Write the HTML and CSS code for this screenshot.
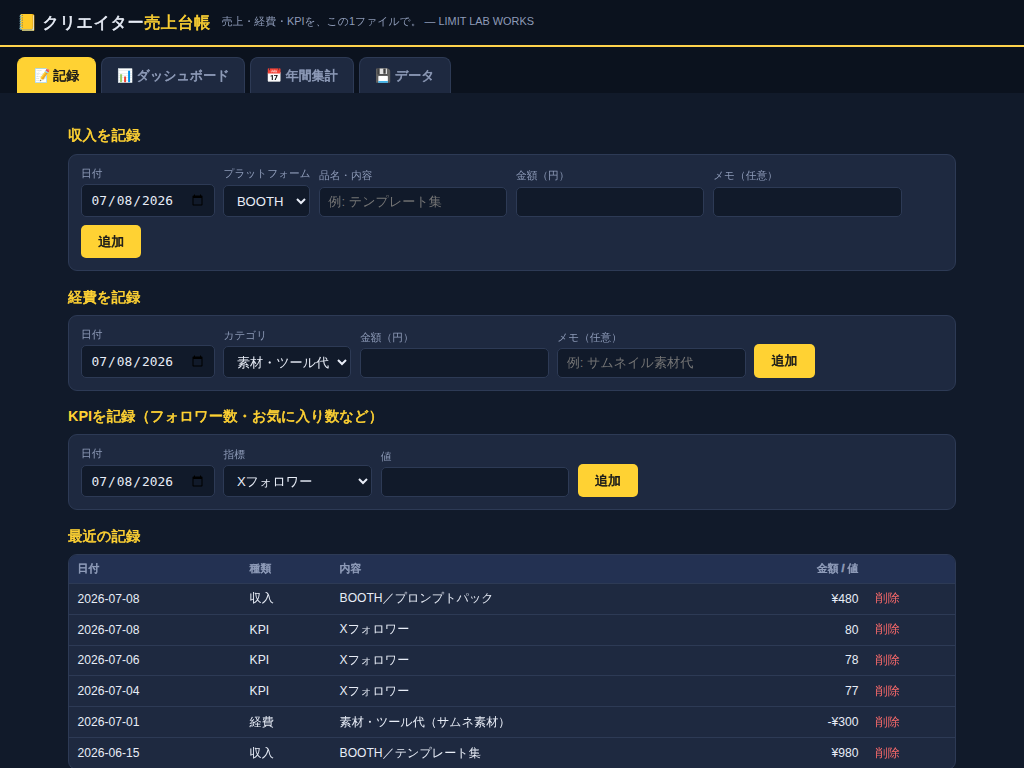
FILE: index.html
```html
<!DOCTYPE html>
<html lang="ja">
<head>
<meta charset="utf-8">
<title>クリエイター売上台帳</title>
<link rel="stylesheet" href="styles.css">
</head>
<body>
<header class="top">
  <h1>📒 クリエイター<span class="accent">売上台帳</span></h1>
  <span class="tagline">売上・経費・KPIを、この1ファイルで。 — LIMIT LAB WORKS</span>
</header>
<nav class="tabs">
  <button class="tab active">📝 記録</button>
  <button class="tab tab-dash">📊 ダッシュボード</button>
  <button class="tab tab-year">📅 年間集計</button>
  <button class="tab tab-data">💾 データ</button>
</nav>
<main>
  <h2>収入を記録</h2>
  <form class="card">
    <label>日付<input type="date" value="2026-07-08"></label>
    <label class="w-platform">プラットフォーム<select class="w-platform"><option>BOOTH</option></select></label>
    <label>品名・内容<input type="text" placeholder="例: テンプレート集"></label>
    <label>金額（円）<input type="text"></label>
    <label>メモ（任意）<input type="text"></label>
    <button type="button" class="add">追加</button>
  </form>
  <h2>経費を記録</h2>
  <form class="card">
    <label>日付<input type="date" value="2026-07-08"></label>
    <label>カテゴリ<select class="w-category"><option>素材・ツール代</option></select></label>
    <label>金額（円）<input type="text"></label>
    <label>メモ（任意）<input type="text" placeholder="例: サムネイル素材代"></label>
    <button type="button" class="add">追加</button>
  </form>
  <h2><span class="latin">KPI</span>を記録（フォロワー数・お気に入り数など）</h2>
  <form class="card">
    <label>日付<input type="date" value="2026-07-08"></label>
    <label>指標<select class="w-metric"><option>Xフォロワー</option></select></label>
    <label>値<input type="text"></label>
    <button type="button" class="add">追加</button>
  </form>
  <h2>最近の記録</h2>
  <div class="table-wrap">
    <table>
      <colgroup><col class="c-date"><col class="c-kind"><col><col class="c-amount"><col class="c-action"></colgroup>
      <thead><tr><th>日付</th><th>種類</th><th>内容</th><th class="num">金額 / 値</th><th></th></tr></thead>
      <tbody>
        <tr><td>2026-07-08</td><td>収入</td><td>BOOTH／プロンプトパック</td><td class="num">¥480</td><td class="del">削除</td></tr>
        <tr><td>2026-07-08</td><td>KPI</td><td>Xフォロワー</td><td class="num">80</td><td class="del">削除</td></tr>
        <tr><td>2026-07-06</td><td>KPI</td><td>Xフォロワー</td><td class="num">78</td><td class="del">削除</td></tr>
        <tr><td>2026-07-04</td><td>KPI</td><td>Xフォロワー</td><td class="num">77</td><td class="del">削除</td></tr>
        <tr><td>2026-07-01</td><td>経費</td><td>素材・ツール代（サムネ素材）</td><td class="num">-¥300</td><td class="del">削除</td></tr>
        <tr><td>2026-06-15</td><td>収入</td><td>BOOTH／テンプレート集</td><td class="num">¥980</td><td class="del">削除</td></tr>
      </tbody>
    </table>
  </div>
</main>
</body>
</html>
```
FILE: styles.css
```css
* { box-sizing: border-box; }
:root { --ui: "Liberation Sans", "WenQuanYi Zen Hei", "Noto Sans CJK JP", sans-serif; }
html { overflow: hidden; }
body {
  margin: 0;
  height: 768px;
  overflow: hidden;
  background: #111a2a;
  color: #e8edf7;
  font-family: var(--ui);
}
h1, h2, th, .tab, .add { -webkit-text-stroke: 0.6px currentColor; }
.latin { -webkit-text-stroke: 0; }
.top {
  display: flex;
  align-items: center;
  gap: 11px;
  height: 47px;
  padding: 0 17px 1px;
  background: #0b121e;
  border-bottom: 2px solid #ffd34d;
}
h1 { margin: 0; padding-top: 1px; font-size: 16.2px; letter-spacing: 0.45px; white-space: nowrap; }
.accent { color: #ffd233; }
.tagline { color: #8e9bb8; font-size: 10.9px; white-space: nowrap; }
.tabs {
  display: flex;
  gap: 5px;
  height: 46px;
  padding: 10px 17px 0;
  background: #0b121e;
}
.tab {
  padding: 0 15px;
  font: bold 13px var(--ui);
  color: #8e9bb8;
  background: #1e2940;
  border: 1px solid #2d3a55;
  border-bottom: 0;
  border-radius: 8px 8px 0 0;
  white-space: nowrap;
}
.tab.active { width: 79px; color: #1a1a1a; background: #ffd233; border-color: #ffd233; }
.tab-dash { width: 144px; }
.tab-year { width: 104px; }
.tab-data { width: 92px; }
main { width: 888px; margin: 0 auto; padding-top: 31.3px; }
h2 { margin: 0; height: 29.3px; line-height: 23px; font-size: 14.4px; color: #ffd233; }
.card {
  display: flex;
  flex-wrap: wrap;
  align-items: flex-end;
  gap: 8.2px 8.7px;
  margin-bottom: 14.2px;
  padding: 12px;
  background: #1e2940;
  border: 1px solid #2d3a55;
  border-radius: 9px;
}
label {
  display: flex;
  flex-direction: column;
  gap: 3.8px;
  color: #8e9bb8;
  font-size: 10.7px;
  line-height: 13.6px;
  white-space: nowrap;
}
input, select {
  padding: 7px 8.4px;
  font: 13.1px var(--ui);
  color: #e8edf7;
  background: #111a2a;
  border: 1px solid #2d3a55;
  border-radius: 5px;
}
input[type="date"] { width: 133.8px; height: 32.7px; padding-right: 7.6px; font: 12.9px "DejaVu Sans Mono", monospace; }
input[type="text"] { width: 188.4px; height: 30px; }
select { height: 32px; }
.w-platform { width: 86.8px; }
.w-category { width: 128px; padding-right: 0; }
.w-metric { width: 148.5px; }
.add {
  width: 60.4px;
  height: 33.5px;
  padding: 0;
  font: bold 13px var(--ui);
  color: #1a1a1a;
  background: #ffd233;
  border: 0;
  border-radius: 5px;
}
.table-wrap {
  overflow: hidden;
  border: 1px solid #2d3a55;
  border-radius: 9px;
  background: #1e2940;
}
table { width: 100%; table-layout: fixed; border-collapse: separate; border-spacing: 0; }
.c-date { width: 172px; }
.c-kind { width: 90px; }
.c-amount { width: 120px; }
.c-action { width: 88px; }
th, td { padding: 0 8.6px; text-align: left; white-space: nowrap; border-bottom: 1px solid #2d3a55; }
th { height: 29px; font-size: 10.8px; color: #8e9bb8; background: #233152; }
td { height: 30.8px; font-size: 12.1px; }
.num { text-align: right; }
.del { color: #ff6b6b; }
tbody tr:last-child td { border-bottom: 0; }
```
